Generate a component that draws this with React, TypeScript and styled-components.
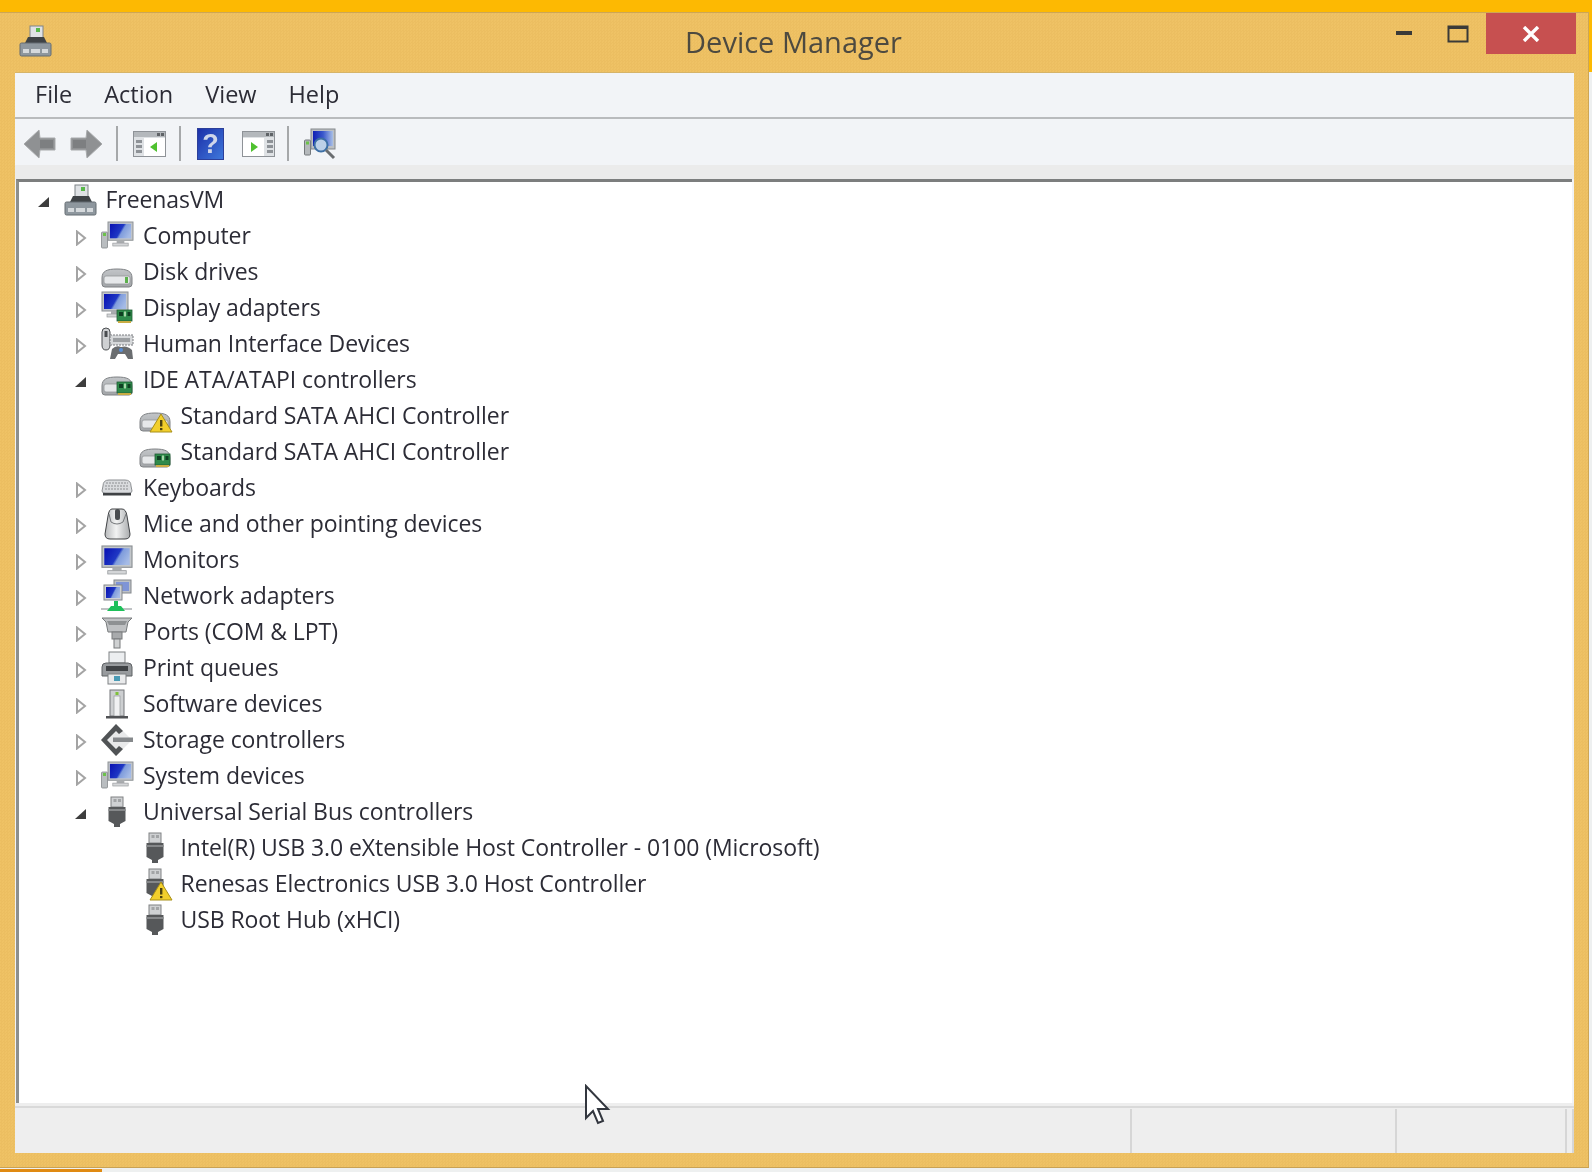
import React from "react";
import styled, { createGlobalStyle } from "styled-components";

const GlobalStyle = createGlobalStyle`
  html, body {
    margin: 0;
    padding: 0;
    background: #eef0f0;
  }
  body {
    font-family: "Open Sans", "Noto Sans", "Liberation Sans", sans-serif;
    color: #2c2c36;
  }
`;

const Page = styled.div`
  width: 1592px;
  height: 1172px;
  overflow: hidden;
  position: relative;
  display: flex;
  flex-direction: column;
  background: linear-gradient(#fdb902 72px, #eef0f0 72px);
`;

const TopStrip = styled.div`
  height: 12px;
  flex: none;
  background: #fdb902;
`;

const Window = styled.div`
  width: 1589px;
  height: 1156px;
  flex: none;
  box-sizing: border-box;
  padding: 0 14px 14px 15px;
  background-color: #efc265;
  background-image: repeating-conic-gradient(rgba(190, 140, 40, 0.07) 0 25%, transparent 0 50%);
  background-size: 3px 3px;
  border-top: 1px solid #cda655;
  border-bottom: 1px solid #c9a254;
  border-right: 1px solid #cda655;
  display: flex;
  flex-direction: column;
`;

const TitleBar = styled.div`
  height: 60px;
  flex: none;
  display: grid;
  grid-template-columns: 1fr auto 1fr;
  margin-left: 4px;
`;

const TitleIcon = styled.div`
  padding-top: 12px;
  filter: blur(0.5px);
`;

const Title = styled.div`
  font-size: 29px;
  line-height: 58px;
  padding-right: 6px;
  color: #4d4a40;
  filter: blur(0.45px);
`;

const Controls = styled.div`
  justify-self: end;
  display: flex;
  align-items: flex-start;
  margin-right: -2px;
`;

const CaptionButton = styled.div`
  width: 54px;
  height: 41px;
  display: flex;
  align-items: center;
  justify-content: center;
  filter: blur(0.3px);
`;

const CloseButton = styled.div`
  width: 90px;
  height: 41px;
  background: #c75050;
  display: flex;
  align-items: center;
  justify-content: center;
  margin-left: 1px;
`;

const Client = styled.div`
  flex: 1;
  min-height: 0;
  display: flex;
  flex-direction: column;
  background: #f1f3f6;
  box-shadow: 0 -1px 0 #d6b468;
`;

const MenuBar = styled.div`
  height: 46px;
  flex: none;
  display: flex;
  align-items: center;
  box-sizing: border-box;
  padding: 0 0 2px 20px;
  gap: 32px;
  background: #f2f4f7;
  border-bottom: 2px solid #b9bbbd;
  font-size: 23.5px;
  filter: blur(0.45px);
`;

const ToolBar = styled.div`
  height: 46px;
  flex: none;
  display: flex;
  align-items: center;
  box-sizing: border-box;
  padding: 3px 0 0 8px;
  background: #f2f4f7;
`;

const ToolIcon = styled.div<{ $gap?: number }>`
  display: flex;
  margin-left: ${(p) => p.$gap ?? 0}px;
  filter: blur(0.5px);
`;

const Separator = styled.div<{ $gap: number }>`
  width: 2px;
  height: 35px;
  background: #a6a8aa;
  margin-left: ${(p) => p.$gap}px;
`;

const ToolGutter = styled.div`
  height: 14px;
  flex: none;
  background: #ebebeb;
`;

const Tree = styled.div`
  flex: 1;
  min-height: 0;
  box-sizing: border-box;
  background: #fff;
  margin: 0 2px 0 1px;
  border-top: 3px solid #7c7e7e;
  border-left: 3px solid #8d8f8d;
`;

const Row = styled.div<{ $level: number }>`
  height: 36px;
  display: flex;
  align-items: center;
  box-sizing: border-box;
  padding-left: ${(p) => 16.5 + p.$level * 37.5}px;
  font-size: 23px;
  white-space: nowrap;
`;

const Expander = styled.div`
  width: 16px;
  height: 16px;
  flex: none;
  display: flex;
  margin-top: 4px;
  filter: blur(0.4px);
`;

const RowIcon = styled.div`
  width: 32px;
  height: 32px;
  flex: none;
  margin-left: 12px;
  display: flex;
  filter: blur(0.5px);
`;

const Label = styled.span`
  margin: 0 0 3px 10px;
  letter-spacing: -0.07px;
  filter: blur(0.45px);
`;

const StatusBar = styled.div`
  height: 50px;
  flex: none;
  display: flex;
  box-sizing: border-box;
  background: #eeeeee;
  box-shadow: inset 0 3px 0 #eeeeee, inset 0 5px 0 #d9d9d9;
`;

const StatusCell = styled.div<{ $width?: number }>`
  box-sizing: border-box;
  margin-top: 6px;
  ${(p) => (p.$width ? `width: ${p.$width}px; flex: none;` : "flex: 1;")}
  border-right: 2px solid #d6d6d6;
`;

const Cursor = styled.svg`
  position: absolute;
  left: 583px;
  top: 1084px;
`;

const TaskbarHint = styled.div`
  position: absolute;
  left: 0;
  bottom: 0;
  width: 102px;
  height: 3px;
  background: #e08a12;
`;

const Monitor = ({ x = 6, y = 3, w = 26, h = 25 }: { x?: number; y?: number; w?: number; h?: number }) => (
  <g transform={`translate(${x} ${y}) scale(${w / 26} ${h / 25})`}>
    <rect x="0" y="0" width="26" height="19" fill="#c2c6ca" stroke="#8c9094" />
    <rect x="2" y="2" width="22" height="15" fill="url(#screen)" />
    <rect x="9" y="19" width="8" height="3" fill="#a9acaf" />
    <rect x="5" y="22" width="16" height="3" fill="#d4d6d8" stroke="#989b9e" strokeWidth="0.7" />
  </g>
);

const Warning = () => (
  <g>
    <path d="M22 14 L33 32 L11 32 Z" fill="#f2cf2c" stroke="#a88f18" strokeWidth="1" />
    <rect x="21" y="20" width="2.4" height="6.5" fill="#4d4310" />
    <rect x="21" y="28" width="2.4" height="2.2" fill="#4d4310" />
  </g>
);

const GreenCard = ({ x = 14, y = 20 }: { x?: number; y?: number }) => (
  <g transform={`translate(${x} ${y})`}>
    <rect x="0" y="0" width="15" height="11" fill="#2f8a4b" stroke="#1f5c34" strokeWidth="0.8" />
    <rect x="2" y="2" width="4" height="4" fill="#0f3f22" />
    <rect x="7" y="1.5" width="2" height="5" fill="#a6d6a8" />
    <rect x="10.5" y="2" width="3" height="4" fill="#0f3f22" />
    <rect x="1" y="11" width="13" height="2" fill="#c9ac44" />
  </g>
);

const Disk = ({ led = true }: { led?: boolean }) => (
  <g>
    <path d="M1 22 C1 15 6 13 16 13 C26 13 31 15 31 22 L31 28 Q31 31 28 31 L4 31 Q1 31 1 28 Z" fill="url(#diskBody)" stroke="#7e8184" />
    <rect x="3" y="20" width="26" height="8" rx="2" fill="#e6e8ea" stroke="#94979a" strokeWidth="0.8" />
    {led && <rect x="24" y="21" width="3" height="6" fill="#5cb04c" />}
  </g>
);

const Usb = () => (
  <g>
    <rect x="10" y="1" width="12" height="10" fill="#cfd1d3" stroke="#808284" />
    <rect x="12.5" y="3" width="3" height="3" fill="#a2a4a6" />
    <rect x="17" y="3" width="3" height="3" fill="#a2a4a6" />
    <path d="M7.5 11 H24.5 V25 L19 28 V31 H13 V28 L7.5 25 Z" fill="#56585a" />
    <rect x="7.5" y="13" width="17" height="2" fill="#86888a" />
  </g>
);

const icons: Record<string, React.ReactNode> = {
  host: (
    <g>
      <rect x="11" y="1" width="13" height="17" fill="#dfe2e5" stroke="#7f8387" />
      <rect x="17" y="3" width="4" height="4" fill="#59b84a" />
      <path d="M9 12 L25 12 L29 20 L5 20 Z" fill="#3f4346" />
      <rect x="1" y="18" width="31" height="13" rx="1.5" fill="#8e979e" stroke="#646c72" />
      <rect x="4" y="24" width="6" height="4" fill="#d5d9dc" />
      <rect x="12" y="24" width="9" height="4" fill="#d5d9dc" />
      <rect x="23" y="24" width="6" height="4" fill="#d5d9dc" />
    </g>
  ),
  computer: (
    <g>
      <rect x="0.5" y="12" width="6" height="16" rx="1" fill="#b9bdc0" stroke="#84888c" strokeWidth="0.8" />
      <rect x="2" y="13" width="3" height="3" fill="#6cc24a" />
      <Monitor x={7} y={2} w={25} h={24} />
    </g>
  ),
  disk: <Disk />,
  display: (
    <g>
      <Monitor x={1} y={0} w={26} h={25} />
      <GreenCard x={16} y={18} />
    </g>
  ),
  hid: (
    <g>
      <path d="M1 4 Q1 0 5 0 Q9 0 9 4 V17 Q9 22 5 22 Q1 22 1 17 Z" fill="#cfd1d3" stroke="#4a4d50" />
      <rect x="3.5" y="3" width="3" height="6" fill="#4a4d50" />
      <rect x="9" y="7" width="23" height="10" fill="#d6d8da" stroke="#787b7e" strokeDasharray="2 1" />
      <rect x="12" y="10" width="17" height="4" fill="#9c9fa2" />
      <path d="M11 21 Q15 17 20 19 Q26 17 31 22 L32 31 L27 31 L24 26 L17 26 L14 31 L9 31 Z" fill="#6a6d70" />
      <circle cx="20" cy="22" r="2" fill="#5a8fd6" />
    </g>
  ),
  ide: (
    <g>
      <Disk led={false} />
      <GreenCard x={16} y={18} />
    </g>
  ),
  ideWarn: (
    <g>
      <Disk led={false} />
      <Warning />
    </g>
  ),
  keyboard: (
    <g>
      <path d="M2 14 Q2 8 8 8 L24 8 Q30 8 30 14 L31 19 Q31 21 28 21 L4 21 Q1 21 1 19 Z" fill="#d9dbde" stroke="#8c8f92" />
      <path d="M5 11 H27 M4 14 H28 M4 17 H28" stroke="#a6a9ac" strokeDasharray="2 1" strokeWidth="1.6" />
      <rect x="2" y="21" width="28" height="2.5" fill="#3f4245" />
    </g>
  ),
  mouse: (
    <g>
      <path d="M11 1 H21 Q25 1 26 8 L29 26 Q29 31 24 31 L9 31 Q4 31 4 26 L7 8 Q8 1 11 1 Z" fill="url(#mouseBody)" stroke="#404245" />
      <rect x="14" y="1" width="5" height="11" rx="2" fill="#4a4d50" />
      <path d="M8 6 L10 14 Q16 18 22 14 L25 6" fill="none" stroke="#76797c" />
    </g>
  ),
  monitor: <Monitor x={1} y={2} w={30} h={28} />,
  network: (
    <g>
      <rect x="13" y="0" width="17" height="13" fill="#bcc0c6" stroke="#84888c" />
      <rect x="15" y="2" width="13" height="9" fill="#7f94d6" />
      <rect x="3" y="5" width="18" height="15" fill="#cfd2d5" stroke="#84888c" />
      <rect x="5" y="7" width="14" height="11" fill="url(#screen)" />
      <rect x="0" y="28" width="31" height="2" fill="#bfc2c4" />
      <path d="M6 31 L10 26 H13 V21 H17 V26 H20 L24 31 Z" fill="#1ec05a" />
    </g>
  ),
  ports: (
    <g>
      <path d="M1 2 H31 L27 6 L25 16 H7 L5 6 Z" fill="#bfc1c3" stroke="#787b7d" />
      <path d="M6 5 H26 L24 9 H8 Z" fill="#8e9193" />
      <rect x="11" y="16" width="10" height="7" fill="#a8aaac" stroke="#787b7d" />
      <rect x="13" y="23" width="6" height="9" fill="#cfd1d2" stroke="#787b7d" />
    </g>
  ),
  print: (
    <g>
      <rect x="8" y="0" width="16" height="11" fill="#eceef0" stroke="#7e8184" />
      <path d="M1 15 Q1 11 5 11 H27 Q31 11 31 15 V24 H1 Z" fill="#989b9e" stroke="#5f6265" />
      <rect x="5" y="14" width="22" height="5" fill="#3f4245" />
      <rect x="7" y="22" width="18" height="10" fill="#e9eaeb" stroke="#7e8184" />
      <rect x="13" y="24" width="6" height="5" fill="#4b9bb5" />
    </g>
  ),
  software: (
    <g>
      <rect x="9" y="2" width="14" height="26" fill="#cdcfd1" stroke="#74777a" />
      <rect x="13" y="8" width="6" height="20" fill="#f0f1f2" stroke="#96999c" strokeWidth="0.7" />
      <rect x="14.5" y="4" width="3" height="3" fill="#7fc23a" />
      <rect x="5" y="28" width="22" height="2.5" fill="#505255" />
    </g>
  ),
  storage: (
    <g>
      <path d="M15 0 L31 16 L15 32 L0 16 Z" fill="#e8e9ea" />
      <path d="M15 0 L22 7 L18 10 L15 7 L6 16 L15 25 L18 22 L22 25 L15 32 L0 16 Z" fill="#505355" />
      <rect x="12" y="13.5" width="20" height="4.5" fill="#86898c" />
    </g>
  ),
  usb: <Usb />,
  usbWarn: (
    <g>
      <Usb />
      <Warning />
    </g>
  ),
};

const DeviceIcon = ({ name }: { name: string }) => (
  <svg width="32" height="32" viewBox="0 0 32 32" overflow="visible">
    <defs>
      <linearGradient id="screen" x1="0" x2="1" y1="0.2" y2="0.6">
        <stop offset="0" stopColor="#0a14b4" />
        <stop offset="0.52" stopColor="#1f38c4" />
        <stop offset="0.62" stopColor="#7f9cdc" />
        <stop offset="1" stopColor="#a5bbe6" />
      </linearGradient>
      <linearGradient id="diskBody" x1="0" x2="0" y1="0" y2="1">
        <stop offset="0" stopColor="#c2c5c8" />
        <stop offset="1" stopColor="#a2a5a8" />
      </linearGradient>
      <linearGradient id="mouseBody" x1="0" x2="1" y1="0" y2="0">
        <stop offset="0" stopColor="#b8babc" />
        <stop offset="0.45" stopColor="#f2f3f3" />
        <stop offset="1" stopColor="#a9abad" />
      </linearGradient>
    </defs>
    {icons[name]}
  </svg>
);

const Arrow = ({ flip }: { flip?: boolean }) => (
  <svg width="33" height="30" viewBox="0 0 33 30">
    <g transform={flip ? "translate(33 0) scale(-1 1)" : undefined}>
      <path d="M16 1 L1 15 L16 29 L17 21 L32 21 L32 9 L17 9 Z" fill="#8f9193" stroke="#a8aaac" />
      <rect x="17" y="11" width="13" height="8" fill="#7d7f81" />
    </g>
  </svg>
);

const PanelIcon = ({ side }: { side: "left" | "right" }) => (
  <svg width="33" height="26" viewBox="0 0 33 26">
    <rect x="0.5" y="0.5" width="32" height="25" fill="#dfe2e5" stroke="#8e9297" />
    <rect x="1" y="1" width="31" height="5" fill="#b4b8bc" />
    <rect x="24" y="2" width="3" height="3" fill="#5f6367" />
    <rect x="28" y="2" width="3" height="3" fill="#5f6367" />
    <rect x={side === "left" ? 11 : 1} y="7" width="21" height="18" fill="#fff" />
    {[9, 14, 19].map((y) => (
      <rect key={y} x={side === "left" ? 3 : 25} y={y} width="6" height="3" fill="#8e9297" />
    ))}
    <path d={side === "left" ? "M24 11 L17 16 L24 21 Z" : "M9 11 L16 16 L9 21 Z"} fill="#4fc12f" />
  </svg>
);

const HelpIcon = () => (
  <svg width="27" height="32" viewBox="0 0 27 32">
    <defs>
      <linearGradient id="helpBlue" x1="0" x2="1" y1="0" y2="1">
        <stop offset="0" stopColor="#1c2fa8" />
        <stop offset="1" stopColor="#3f79dc" />
      </linearGradient>
    </defs>
    <rect x="0.5" y="0.5" width="26" height="31" fill="url(#helpBlue)" stroke="#2c3f9a" />
    <text x="13.5" y="25" textAnchor="middle" fontFamily="Liberation Sans, sans-serif" fontWeight="700" fontSize="27" fill="#cfd6ea">
      ?
    </text>
  </svg>
);

const ScanIcon = () => (
  <svg width="33" height="32" viewBox="0 0 33 32">
    <rect x="0.5" y="12" width="6" height="15" rx="1" fill="#b5b9bc" stroke="#74787c" />
    <rect x="2" y="13.5" width="3" height="3" fill="#6cc24a" />
    <rect x="7" y="1" width="24" height="20" fill="#bcc0c4" stroke="#84888c" />
    <rect x="9" y="3" width="20" height="15" fill="url(#scanBlue)" />
    <defs>
      <linearGradient id="scanBlue" x1="0" x2="1">
        <stop offset="0" stopColor="#1020b4" />
        <stop offset="0.5" stopColor="#3a58cc" />
        <stop offset="1" stopColor="#a9bfe6" />
      </linearGradient>
    </defs>
    <circle cx="17" cy="17" r="6.5" fill="#bcd0e8" stroke="#3d6fa5" strokeWidth="2" />
    <path d="M22 22 L30 30" stroke="#6a6d70" strokeWidth="3" />
  </svg>
);

const Collapsed = () => (
  <svg width="16" height="16" viewBox="0 0 16 16">
    <path d="M4 1.5 L12 8 L4 14.5 Z" fill="#fff" stroke="#a4a4a4" strokeWidth="2" />
  </svg>
);

const Expanded = () => (
  <svg width="16" height="16" viewBox="0 0 16 16">
    <path d="M13 3 V13 H2 Z" fill="#3d3d3d" />
  </svg>
);

type Device = { label: string; icon: string; level: number; state?: "open" | "closed" };

const devices: Device[] = [
  { label: "FreenasVM", icon: "host", level: 0, state: "open" },
  { label: "Computer", icon: "computer", level: 1, state: "closed" },
  { label: "Disk drives", icon: "disk", level: 1, state: "closed" },
  { label: "Display adapters", icon: "display", level: 1, state: "closed" },
  { label: "Human Interface Devices", icon: "hid", level: 1, state: "closed" },
  { label: "IDE ATA/ATAPI controllers", icon: "ide", level: 1, state: "open" },
  { label: "Standard SATA AHCI Controller", icon: "ideWarn", level: 2 },
  { label: "Standard SATA AHCI Controller", icon: "ide", level: 2 },
  { label: "Keyboards", icon: "keyboard", level: 1, state: "closed" },
  { label: "Mice and other pointing devices", icon: "mouse", level: 1, state: "closed" },
  { label: "Monitors", icon: "monitor", level: 1, state: "closed" },
  { label: "Network adapters", icon: "network", level: 1, state: "closed" },
  { label: "Ports (COM & LPT)", icon: "ports", level: 1, state: "closed" },
  { label: "Print queues", icon: "print", level: 1, state: "closed" },
  { label: "Software devices", icon: "software", level: 1, state: "closed" },
  { label: "Storage controllers", icon: "storage", level: 1, state: "closed" },
  { label: "System devices", icon: "computer", level: 1, state: "closed" },
  { label: "Universal Serial Bus controllers", icon: "usb", level: 1, state: "open" },
  { label: "Intel(R) USB 3.0 eXtensible Host Controller - 0100 (Microsoft)", icon: "usb", level: 2 },
  { label: "Renesas Electronics USB 3.0 Host Controller", icon: "usbWarn", level: 2 },
  { label: "USB Root Hub (xHCI)", icon: "usb", level: 2 },
];

export default function App() {
  return (
    <Page>
      <GlobalStyle />
      <TopStrip />
      <Window>
        <TitleBar>
          <TitleIcon>
            <DeviceIcon name="host" />
          </TitleIcon>
          <Title>Device Manager</Title>
          <Controls>
            <CaptionButton>
              <svg width="18" height="5" viewBox="0 0 18 5">
                <rect x="1" y="0" width="16" height="4" fill="#3a3a38" />
              </svg>
            </CaptionButton>
            <CaptionButton>
              <svg width="22" height="18" viewBox="0 0 22 18">
                <rect x="1.5" y="1.5" width="19" height="15" fill="none" stroke="#3a3a38" strokeWidth="2" />
                <rect x="1" y="1" width="20" height="3" fill="#3a3a38" />
              </svg>
            </CaptionButton>
            <CloseButton>
              <svg width="18" height="16" viewBox="0 0 18 16">
                <path d="M2 1 L16 15 M16 1 L2 15" stroke="#fff" strokeWidth="3.4" />
              </svg>
            </CloseButton>
          </Controls>
        </TitleBar>
        <Client>
          <MenuBar>
            <span>File</span>
            <span>Action</span>
            <span>View</span>
            <span>Help</span>
          </MenuBar>
          <ToolBar>
            <ToolIcon>
              <Arrow />
            </ToolIcon>
            <ToolIcon $gap={14}>
              <Arrow flip />
            </ToolIcon>
            <Separator $gap={13} />
            <ToolIcon $gap={15}>
              <PanelIcon side="left" />
            </ToolIcon>
            <Separator $gap={13} />
            <ToolIcon $gap={16}>
              <HelpIcon />
            </ToolIcon>
            <ToolIcon $gap={18}>
              <PanelIcon side="right" />
            </ToolIcon>
            <Separator $gap={12} />
            <ToolIcon $gap={15}>
              <ScanIcon />
            </ToolIcon>
          </ToolBar>
          <ToolGutter />
          <Tree>
            {devices.map((d, i) => (
              <Row key={i} $level={d.level}>
                <Expander>
                  {d.state === "open" && <Expanded />}
                  {d.state === "closed" && <Collapsed />}
                </Expander>
                <RowIcon>
                  <DeviceIcon name={d.icon} />
                </RowIcon>
                <Label>{d.label}</Label>
              </Row>
            ))}
          </Tree>
          <StatusBar>
            <StatusCell />
            <StatusCell $width={265} />
            <StatusCell $width={170} />
            <StatusCell $width={7} />
          </StatusBar>
        </Client>
      </Window>
      <TaskbarHint />
      <Cursor width="28" height="42" viewBox="0 0 28 42">
        <path d="M3 2 L3 34 L10 27 L15 39 L20 37 L15 25 L25 25 Z" fill="#fff" stroke="#33373f" strokeWidth="2" />
      </Cursor>
    </Page>
  );
}
